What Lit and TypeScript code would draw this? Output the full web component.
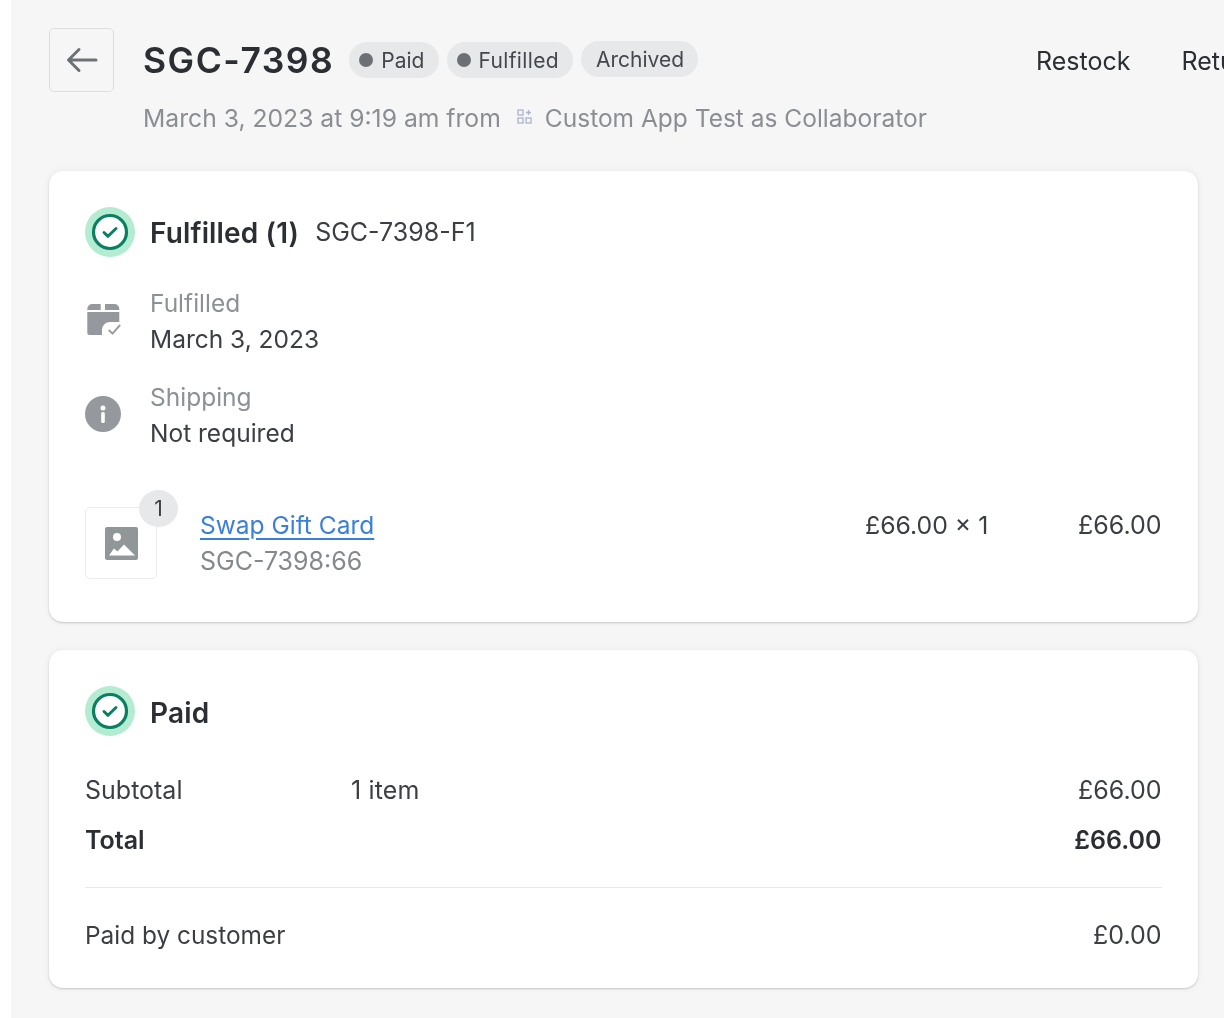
import { LitElement, html, css } from "lit";
import { customElement } from "lit/decorators.js";

const checkBadge = html`<svg class="status" viewBox="0 0 50 50" aria-hidden="true">
  <circle cx="25" cy="25" r="25" fill="#b4ecd2"/>
  <circle cx="25" cy="25" r="16.500" fill="#fff" stroke="#0a7f62" stroke-width="3.200"/>
  <path d="M19 25.500l4 3.800 8-7.800" fill="none" stroke="#0a7f62" stroke-width="3" stroke-linecap="round" stroke-linejoin="round"/>
</svg>`;

@customElement("app-root")
export class AppRoot extends LitElement {
  static styles = css`
    :host { display: block; background: #fff; height: 1018px; overflow: hidden; font-family: Inter, "Liberation Sans", sans-serif; color: #303338; }
    .page { margin-left: 11px; height: 1018px; background: #f6f6f7; padding: 28px 26px 0 38px; box-sizing: border-box; overflow: hidden; filter: blur(0.4px); }
    .header { display: flex; gap: 29px; height: 143px; }
    .back { width: 65px; height: 64px; box-sizing: border-box; border: 1.500px solid #dcdee0; border-radius: 5px; display: flex; align-items: center; justify-content: center; flex: none; }
    .back svg { width: 32px; height: 28px; }
    .head-main { flex: 1; min-width: 0; }
    .title-row { display: flex; align-items: center; height: 64px; }
    h1 { margin: 1px 15px 0 0; font-size: 35.500px; line-height: 64px; font-weight: 600; color: #2b2e32; letter-spacing: 1.500px; white-space: nowrap; }
    .badges { display: flex; gap: 8px; }
    .badge { display: flex; align-items: center; gap: 8px; height: 36px; padding: 0 15px 0 10px; border-radius: 18px; background: #e7e8ea; font-size: 21px; color: #44474c; white-space: nowrap; }
    .badge i { width: 14px; height: 14px; border-radius: 50%; background: #6d7175; }
    .badge.ful { letter-spacing: 0.350px; padding-right: 14px; gap: 7px; }
    .badge.plain { padding: 0 14px 0 15px; margin-top: -1px; }
    .actions { display: flex; gap: 51px; font-size: 25px; color: #2b2e32; flex: none; margin-left: auto; width: 162px; white-space: nowrap; margin-top: 2px; }
    .sub { display: flex; align-items: center; font-size: 24.700px; line-height: 36px; color: #8a8e93; margin-top: 8px; white-space: nowrap; }
    .sub svg { width: 15px; height: 15px; margin: 0 13px 4px 16px; flex: none; }
    .sub .app { font-size: 24.500px; }
    .card { width: 1149px; box-sizing: border-box; background: #fff; border-radius: 14px; box-shadow: 0 1px 2px rgba(0,0,0,.18), 0 0 8px rgba(0,0,0,.05); padding: 36px; margin-bottom: 28px; }
    .card.one { height: 451px; }
    .card.two { height: 338px; }
    .card.two h2 { margin-top: 4px; }
    .status { width: 50px; height: 50px; flex: none; display: block; }
    .card-title { display: flex; align-items: center; height: 50px; gap: 15px; }
    h2 { margin: 2px 0 0; font-size: 28px; letter-spacing: 0.150px; font-weight: 600; color: #2b2e32; white-space: nowrap; }
    .ref { font-size: 25px; margin-left: 1px; color: #3b3e43; }
    .info { display: flex; height: 72px; margin-top: 28px; gap: 29px; }
    .info + .info { margin-top: 22px; }
    .info .ic { width: 36px; height: 72px; flex: none; display: flex; align-items: center; }
    .info .ic svg { width: 36px; height: 36px; display: block; margin-top: -2px; }
    .muted { color: #8c9196; font-size: 24.500px; line-height: 36px; }
    .val { font-size: 24.500px; line-height: 36px; color: #3b3e43; }
    .item { display: flex; margin-top: 56px; height: 72px; }
    .thumb { position: relative; width: 72px; height: 72px; box-sizing: border-box; border: 1px solid #ececee; border-radius: 5px; display: flex; align-items: center; justify-content: center; flex: none; }
    .thumb svg { width: 33px; height: 33px; }
    .count { position: absolute; top: -18px; right: -22px; width: 39px; height: 37px; border-radius: 50%; background: #e7e8ea; font-size: 21px; display: flex; align-items: center; justify-content: center; color: #3b3e43; }
    .item-text { margin-left: 43px; flex: 1; }
    a { color: #3a80d8; font-size: 24.500px; line-height: 36px; text-decoration: underline; text-underline-offset: 4px; text-decoration-thickness: 1.500px; display: block; width: max-content; }
    .sku { color: #85888c; font-size: 25px; line-height: 36px; }
    .price { width: 125px; font-size: 24.800px; line-height: 36px; color: #3b3e43; white-space: nowrap; margin-left: -1px; }
    .line { width: 172px; text-align: right; font-size: 25px; line-height: 36px; color: #3b3e43; padding-right: 0.500px; box-sizing: border-box; }
    .rows { margin-top: 36px; }
    .row { display: flex; font-size: 25px; line-height: 36px; color: #3b3e43; margin-bottom: 14px; }
    .row .l { width: 265px; }
    .row .l.long { font-size: 24.400px; }
    .row .m { flex: 1; padding-left: 1px; letter-spacing: 0.150px; }
    .row .amt { padding-right: 0.500px; }
    .row.total { font-weight: 600; color: #2b2e32; }
    .rule { height: 1px; background: #e9e9eb; margin: 29px 0 29px; }
  `;

  render() {
    return html`<div class="page">
      <div class="header">
        <div class="back"><svg viewBox="0 0 32 28" fill="none" stroke="#6d7175" stroke-width="3" stroke-linecap="round" stroke-linejoin="round"><path d="M30 14H3M13 3.500L2.500 14 13 24.500"/></svg></div>
        <div class="head-main">
          <div class="title-row">
            <h1>SGC-7398</h1>
            <div class="badges">
              <span class="badge"><i></i>Paid</span>
              <span class="badge ful"><i></i>Fulfilled</span>
              <span class="badge plain">Archived</span>
            </div>
            <div class="actions"><span>Restock</span><span>Return</span></div>
          </div>
          <div class="sub">March 3, 2023 at 9:19 am from
            <svg viewBox="0 0 15 15" fill="none" stroke="#a9b4cb" stroke-width="1.300"><rect x="1" y="1" width="5" height="5"/><rect x="1" y="9" width="5" height="5"/><rect x="9" y="9" width="5" height="5"/><path d="M11.500 1v5M9 3.500h5"/></svg>
            <span class="app">Custom App Test as Collaborator</span></div>
        </div>
      </div>

      <section class="card one">
        <div class="card-title">${checkBadge}<h2>Fulfilled (1)</h2><span class="ref">SGC-7398-F1</span></div>
        <div class="info">
          <div class="ic"><svg viewBox="0 0 36 36">
            <path d="M2.300 7a5 5 0 015-5h8.400v6H2.300zM20 2h9.300a5 5 0 015 5v1H20z" fill="#95999d"/>
            <path d="M2.300 10h32v10H25a8 8 0 00-8 8v5H4.300a2 2 0 01-2-2z" fill="#95999d"/>
            <path d="M23.800 28l3.700 3.600 7.600-8.600" fill="none" stroke="#9a9ea3" stroke-width="2"/>
          </svg></div>
          <div><div class="muted">Fulfilled</div><div class="val">March 3, 2023</div></div>
        </div>
        <div class="info">
          <div class="ic"><svg viewBox="0 0 36 36">
            <circle cx="18" cy="18" r="18" fill="#95999d"/>
            <circle cx="18" cy="12" r="2.500" fill="#fff"/>
            <rect x="16.200" y="16" width="3.600" height="11" rx="1.500" fill="#fff"/>
          </svg></div>
          <div><div class="muted">Shipping</div><div class="val">Not required</div></div>
        </div>
        <div class="item">
          <div class="thumb">
            <svg viewBox="0 0 33 33">
              <path fill-rule="evenodd" d="M2 0h29a2 2 0 012 2v29a2 2 0 01-2 2H2a2 2 0 01-2-2V2a2 2 0 012-2zM12 14a4 4 0 100-8 4 4 0 000 8zM4 28.500l5-7 3.500 3 6.500-7 11 11z" fill="#919699"/>
            </svg>
            <span class="count">1</span>
          </div>
          <div class="item-text"><a href="#">Swap Gift Card</a><div class="sku">SGC-7398:66</div></div>
          <div class="price">£66.00 × 1</div>
          <div class="line">£66.00</div>
        </div>
      </section>

      <section class="card two">
        <div class="card-title">${checkBadge}<h2>Paid</h2></div>
        <div class="rows">
          <div class="row"><span class="l">Subtotal</span><span class="m">1 item</span><span class="amt">£66.00</span></div>
          <div class="row total"><span class="l">Total</span><span class="m"></span><span class="amt">£66.00</span></div>
          <div class="rule"></div>
          <div class="row"><span class="l long">Paid by customer</span><span class="m"></span><span class="amt">£0.00</span></div>
        </div>
      </section>
    </div>`;
  }
}
